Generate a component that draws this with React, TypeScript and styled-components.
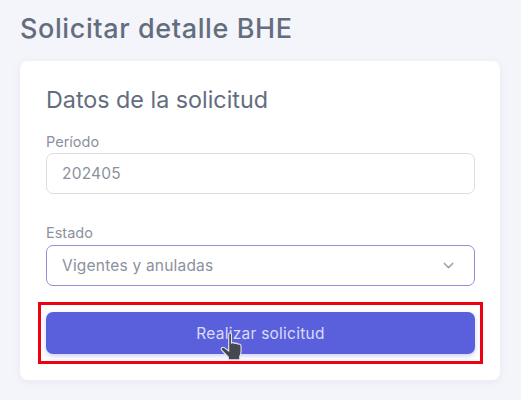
import React from "react";
import styled, { createGlobalStyle } from "styled-components";
import { FiChevronDown } from "react-icons/fi";

const GlobalStyle = createGlobalStyle`
  html, body {
    margin: 0;
    padding: 0;
    background: #f4f5fa;
    font-family: "Inter", "Liberation Sans", sans-serif;
  }
`;

const Page = styled.main`
  width: 521px;
  height: 400px;
  box-sizing: border-box;
  padding: 12px 21px 20px 20px;
  overflow: hidden;
`;

const Title = styled.h1`
  margin: 0 0 15px;
  font-size: 27px;
  line-height: 34px;
  font-weight: 500;
  letter-spacing: 0.6px;
  color: #646d7e;
`;

const Card = styled.section`
  height: 319px;
  box-sizing: border-box;
  padding: 24px 25px 0 26px;
  background: #fff;
  border-radius: 8px;
  box-shadow: 0 2px 8px rgba(90, 100, 140, 0.08);
`;

const CardTitle = styled.h2`
  margin: 0 0 18px;
  font-size: 23.3px;
  line-height: 30px;
  font-weight: 400;
  color: #646d7e;
`;

const Field = styled.div<{ $gap: number }>`
  margin-bottom: ${(p) => p.$gap}px;
`;

const Label = styled.label<{ $gap: number }>`
  display: block;
  margin-bottom: ${(p) => p.$gap}px;
  font-size: 14.5px;
  line-height: 17px;
  color: #8b919d;
`;

const Control = styled.div<{ $focused?: boolean }>`
  display: flex;
  align-items: center;
  justify-content: space-between;
  height: 41px;
  box-sizing: border-box;
  padding: 0 17px 0 15px;
  background: #fff;
  border: 1px solid ${(p) => (p.$focused ? "#8f8fdc" : "#dcdee3")};
  border-radius: 7px;
  font-size: 15.5px;
  letter-spacing: 0.2px;
  color: #8b919d;
`;

const ButtonWrap = styled.div`
  position: relative;
`;

const SubmitButton = styled.button`
  display: block;
  width: 100%;
  height: 42px;
  padding: 0;
  border: 0;
  border-radius: 7px;
  background: #5a60dc;
  box-shadow: 0 2px 5px rgba(90, 96, 220, 0.3);
  font-family: inherit;
  font-size: 15.5px;
  letter-spacing: 0.25px;
  color: #d9dcf8;
`;

const Highlight = styled.div`
  position: absolute;
  inset: -10px -8px -10px -8px;
  border: 3px solid #ee0011;
  pointer-events: none;
`;

const Cursor = styled.svg`
  position: absolute;
  left: 173px;
  top: 20px;
`;

const HandCursor = () => (
  <Cursor width="28" height="30" viewBox="0 0 26 28">
    <path
      d="M9 2.2c0-1.6 2.6-1.6 2.6 0v8.2c1-.6 2.4-.4 3 .3 1-.5 2.3-.2 2.9.6 1.2-.4 3 .2 3 1.8v5c0 2-.6 3.4-1.2 4.6V26H8.6v-2.6L2.4 17c-1.4-1.6.6-3.6 2.4-2.4L9 17.6z"
      fill="#45484f"
      stroke="#e8e9f5"
      strokeWidth="1"
    />
  </Cursor>
);

export default function App() {
  return (
    <Page>
      <GlobalStyle />
      <Title>Solicitar detalle BHE</Title>
      <Card>
        <CardTitle>Datos de la solicitud</CardTitle>
        <Field $gap={30}>
          <Label $gap={3}>Período</Label>
          <Control>202405</Control>
        </Field>
        <Field $gap={26}>
          <Label $gap={4}>Estado</Label>
          <Control $focused>
            Vigentes y anuladas
            <FiChevronDown size={17} color="#a0a5b0" />
          </Control>
        </Field>
        <ButtonWrap>
          <SubmitButton type="button">Realizar solicitud</SubmitButton>
          <Highlight />
          <HandCursor />
        </ButtonWrap>
      </Card>
    </Page>
  );
}
